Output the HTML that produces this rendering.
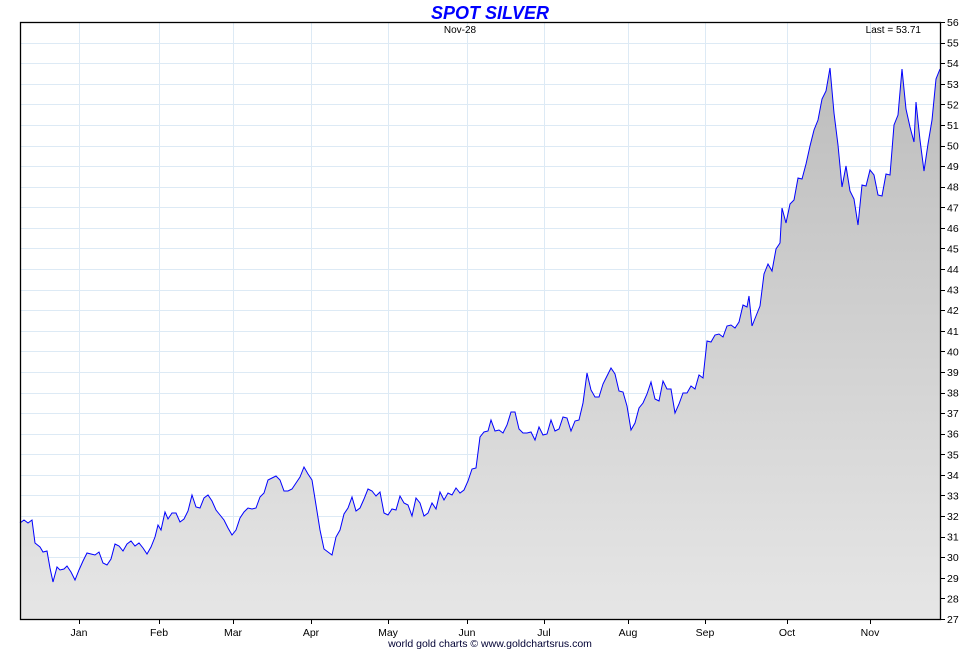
<!DOCTYPE html>
<html><head><meta charset="utf-8"><style>
body{margin:0;background:#fff;}
svg{display:block;font-family:"Liberation Sans",sans-serif;}
</style></head><body>
<svg width="980" height="650" viewBox="0 0 980 650">
<defs><linearGradient id="g" x1="0" y1="0" x2="0" y2="1"><stop offset="0" stop-color="#bdbdbd"/><stop offset="1" stop-color="#e6e6e6"/></linearGradient></defs>
<rect x="0" y="0" width="980" height="650" fill="#fff"/>
<g id="grid" stroke="#ddeaf5" stroke-width="1"></g>
<polygon id="area" fill="url(#g)"/>
<polyline id="line" fill="none" stroke="#0000ff" stroke-width="1"/>
<rect x="20.5" y="22.5" width="920" height="597" fill="none" stroke="#000" stroke-width="1.3"/>
<g id="ylab" font-size="10.5" fill="#000"></g>
<g id="xlab" font-size="10.5" fill="#000" text-anchor="middle">
<text x="79" y="636">Jan</text><text x="159" y="636">Feb</text><text x="233" y="636">Mar</text><text x="311" y="636">Apr</text><text x="388" y="636">May</text><text x="467" y="636">Jun</text><text x="544" y="636">Jul</text><text x="628" y="636">Aug</text><text x="705" y="636">Sep</text><text x="787" y="636">Oct</text><text x="870" y="636">Nov</text>
</g>
<text x="490" y="647" font-size="10.5" text-anchor="middle" fill="#000033">world gold charts © www.goldchartsrus.com</text>
<text x="490" y="19" font-size="18" font-weight="bold" font-style="italic" fill="#0000ff" text-anchor="middle">SPOT SILVER</text>
<text x="460" y="33" font-size="10" text-anchor="middle">Nov-28</text>
<text x="921" y="33" font-size="10" text-anchor="end">Last = 53.71</text>
</svg>
<script>
var pts=[[20,523],[24,520],[28,523],[32,520],[35,543],[40,547],[43,552],[47,551],[50,568],[53,582],[57,567],[60,570],[64,569],[67,566],[71,572],[75,580],[79,570],[83,561],[87,553],[91,554],[95,555],[99,552],[103,563],[107,565],[111,559],[115,544],[119,546],[123,551],[127,544],[131,541],[135,546],[139,543],[143,548],[147,554],[151,547],[155,537],[158,525],[161,530],[165,512],[168,519],[172,513],[176,513],[180,522],[184,519],[188,511],[192,495],[196,507],[200,508],[204,498],[208,495],[212,501],[216,510],[220,515],[224,520],[228,528],[232,535],[236,530],[240,518],[244,512],[248,508],[252,509],[256,508],[260,497],[264,493],[268,480],[272,478],[276,476],[280,480],[284,491],[288,491],[292,489],[296,483],[300,477],[304,467],[308,474],[312,480],[316,505],[320,530],[324,549],[328,552],[332,555],[336,537],[340,530],[344,514],[348,508],[352,497],[356,511],[360,508],[364,499],[368,489],[372,491],[376,496],[380,492],[384,513],[388,515],[392,509],[396,510],[400,496],[404,503],[408,505],[412,516],[416,498],[420,503],[424,516],[428,513],[432,503],[436,509],[440,492],[444,500],[448,493],[452,495],[456,488],[460,493],[464,490],[468,481],[472,469],[476,468],[480,437],[484,432],[488,431],[491,420],[495,431],[499,430],[503,433],[507,425],[511,412],[515,412],[519,429],[523,433],[527,433],[531,432],[535,440],[539,427],[543,435],[547,434],[551,420],[555,431],[559,429],[563,417],[567,418],[571,431],[575,421],[579,420],[583,403],[587,373],[591,390],[595,397],[599,397],[603,384],[607,376],[611,368],[615,374],[619,391],[623,392],[627,406],[631,430],[635,423],[639,408],[643,403],[647,394],[651,382],[655,399],[659,401],[663,381],[667,389],[671,389],[675,413],[679,404],[683,393],[687,393],[691,386],[695,389],[699,375],[703,378],[707,341],[711,342],[715,335],[719,334],[723,337],[727,326],[731,325],[735,328],[739,322],[743,305],[747,307],[749,296],[752,326],[756,316],[760,306],[764,274],[768,264],[772,271],[776,249],[780,243],[782,208],[786,223],[790,204],[794,200],[798,178],[802,179],[806,164],[810,146],[814,130],[818,120],[822,99],[826,91],[830,68],[834,113],[838,145],[842,187],[846,166],[850,191],[854,199],[858,225],[862,185],[866,186],[870,170],[874,175],[878,195],[882,196],[886,174],[890,175],[894,125],[898,115],[902,69],[906,109],[910,127],[914,142],[916,102],[920,140],[924,171],[928,144],[932,120],[936,79],[940,69]];
var s=pts.map(function(p){return p.join(',')}).join(' ');
document.getElementById('line').setAttribute('points',s);
document.getElementById('area').setAttribute('points','20,619 '+s+' 940,619');
var ns='http://www.w3.org/2000/svg',g=document.getElementById('grid'),yl=document.getElementById('ylab');
[79,159,233,311,388,467,544,628,705,787,870].forEach(function(x){var l=document.createElementNS(ns,'line');l.setAttribute('x1',x+.5);l.setAttribute('x2',x+.5);l.setAttribute('y1',22);l.setAttribute('y2',619);g.appendChild(l);
var t=document.createElementNS(ns,'line');t.setAttribute('x1',x+.5);t.setAttribute('x2',x+.5);t.setAttribute('y1',619);t.setAttribute('y2',624);t.setAttribute('stroke','#000');document.getElementById('xlab').appendChild(t);});
for(var v=27;v<=56;v++){var y=22+(56-v)*597/29;var l=document.createElementNS(ns,'line');l.setAttribute('x1',20);l.setAttribute('x2',940);l.setAttribute('y1',Math.round(y)+.5);l.setAttribute('y2',Math.round(y)+.5);g.appendChild(l);
var tk=document.createElementNS(ns,'line');tk.setAttribute('x1',940);tk.setAttribute('x2',945);tk.setAttribute('y1',Math.round(y)+.5);tk.setAttribute('y2',Math.round(y)+.5);tk.setAttribute('stroke','#000');yl.appendChild(tk);
var t=document.createElementNS(ns,'text');t.setAttribute('x',947);t.setAttribute('y',y+4);t.textContent=v;yl.appendChild(t);}
</script>
</body></html>
